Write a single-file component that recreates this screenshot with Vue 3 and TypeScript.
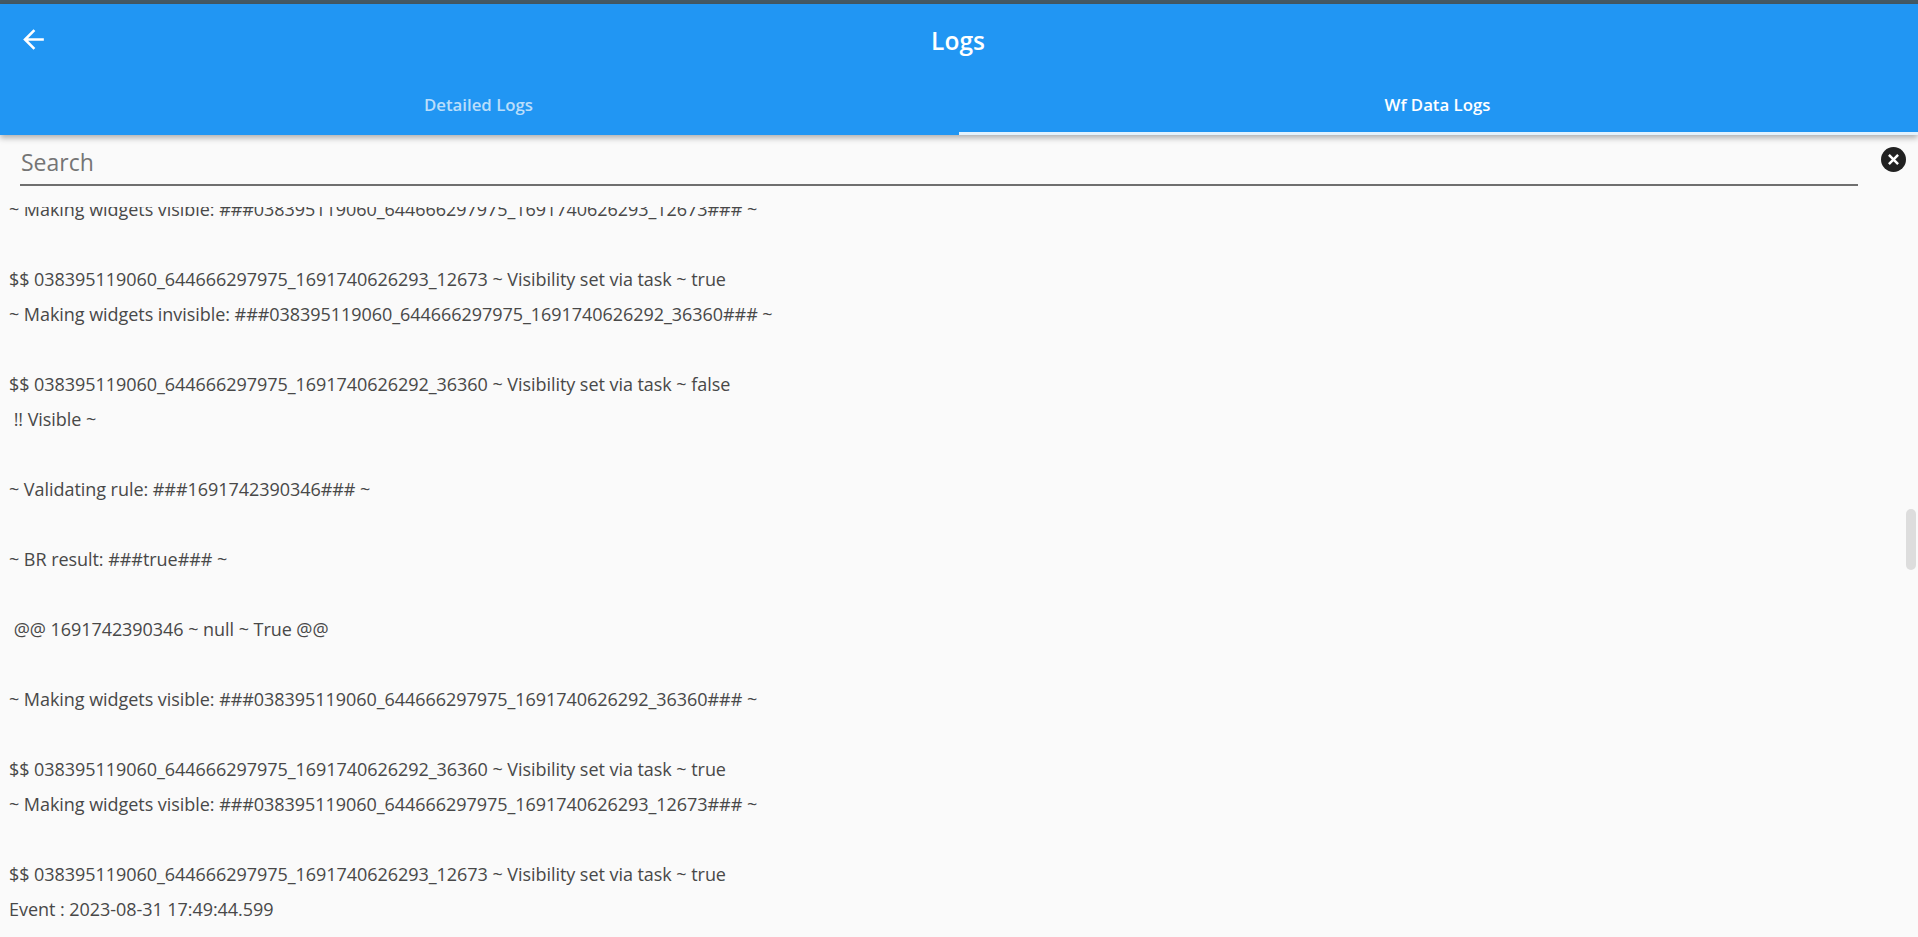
<script setup lang="ts">
const lines: string[] = [
  '~ Making widgets visible: ###038395119060_644666297975_1691740626293_12673### ~',
  '',
  '$$ 038395119060_644666297975_1691740626293_12673 ~ Visibility set via task ~ true',
  '~ Making widgets invisible: ###038395119060_644666297975_1691740626292_36360### ~',
  '',
  '$$ 038395119060_644666297975_1691740626292_36360 ~ Visibility set via task ~ false',
  ' !! Visible ~',
  '',
  '~ Validating rule: ###1691742390346### ~',
  '',
  '~ BR result: ###true### ~',
  '',
  ' @@ 1691742390346 ~ null ~ True @@',
  '',
  '~ Making widgets visible: ###038395119060_644666297975_1691740626292_36360### ~',
  '',
  '$$ 038395119060_644666297975_1691740626292_36360 ~ Visibility set via task ~ true',
  '~ Making widgets visible: ###038395119060_644666297975_1691740626293_12673### ~',
  '',
  '$$ 038395119060_644666297975_1691740626293_12673 ~ Visibility set via task ~ true',
  'Event : 2023-08-31 17:49:44.599',
]
</script>

<template>
  <div class="page">
    <div class="topline"></div>
    <header class="appbar">
      <div class="titlerow">
        <button class="back" aria-label="Back">
          <svg viewBox="0 0 24 24" width="31" height="31"><path fill="#fff" d="M20 11H7.83l5.59-5.59L12 4l-8 8 8 8 1.41-1.41L7.83 13H20v-2z"/></svg>
        </button>
        <h1 class="title">Logs</h1>
      </div>
      <nav class="tabs">
        <div class="tab">Detailed Logs</div>
        <div class="tab active">Wf Data Logs</div>
      </nav>
    </header>
    <div class="searchrow">
      <div class="field">Search</div>
      <button class="clear" aria-label="Clear">
        <svg viewBox="0 0 24 24" width="25" height="25"><circle cx="12" cy="12" r="12" fill="#212121"/><path d="M7.6 7.6l8.8 8.8M16.4 7.6l-8.8 8.8" stroke="#fff" stroke-width="2.4" fill="none"/></svg>
      </button>
    </div>
    <main class="log">
      <div class="logtext">
        <div v-for="(l, i) in lines" :key="i" class="line">{{ l }}</div>
      </div>
      <div class="thumb"></div>
    </main>
  </div>
</template>

<style>
html, body { margin: 0; height: 100%; overflow: hidden; background: #fafafa; }
</style>

<style scoped>
.page { height: 937px; display: flex; flex-direction: column; overflow: hidden; background: #fafafa; font-family: "Open Sans", "Noto Sans", sans-serif; }
.topline { height: 4px; background: #455a64; flex: none; }
.appbar { height: 131px; flex: none; background: #2196f3; box-shadow: 0 3px 6px rgba(0,0,0,.3); display: flex; flex-direction: column; position: relative; z-index: 2; color: #fff; }
.titlerow { height: 75px; position: relative; display: flex; align-items: flex-start; justify-content: center; flex: none; padding-right: 2px; box-sizing: border-box; }
.back { position: absolute; left: 18px; top: 20px; padding: 0; border: 0; background: none; display: flex; }
.title { margin: 0; font-size: 24.5px; font-weight: 600; line-height: 73px; }
.tabs { flex: 1; display: flex; }
.tab { flex: 1; display: flex; align-items: center; justify-content: center; font-size: 16.8px; font-weight: 600; color: rgba(255,255,255,.7); padding: 0 2px 5px 0; box-sizing: border-box; }
.tab.active { color: #fff; border-bottom: 3px solid #e3f2fd; padding-bottom: 2px; }
.searchrow { height: 72px; flex: none; display: flex; align-items: flex-start; padding-left: 20px; box-sizing: border-box; position: relative; }
.field { width: 1838px; height: 51px; box-sizing: border-box; border-bottom: 2px solid #6f6f6f; font-size: 23px; line-height: 55px; color: #757575; padding-left: 1px; }
.clear { margin-left: 23px; margin-top: 12px; padding: 0; border: 0; background: none; display: flex; }
.log { flex: 1; position: relative; overflow: hidden; }
.logtext { margin-top: -15px; padding-left: 9px; }
.line { height: 35px; line-height: 35px; font-size: 18px; letter-spacing: -0.05px; color: #484848; white-space: pre; }
.thumb { position: absolute; left: 1906px; top: 302px; width: 10px; height: 61px; border-radius: 5px; background: #dddddd; }
</style>
